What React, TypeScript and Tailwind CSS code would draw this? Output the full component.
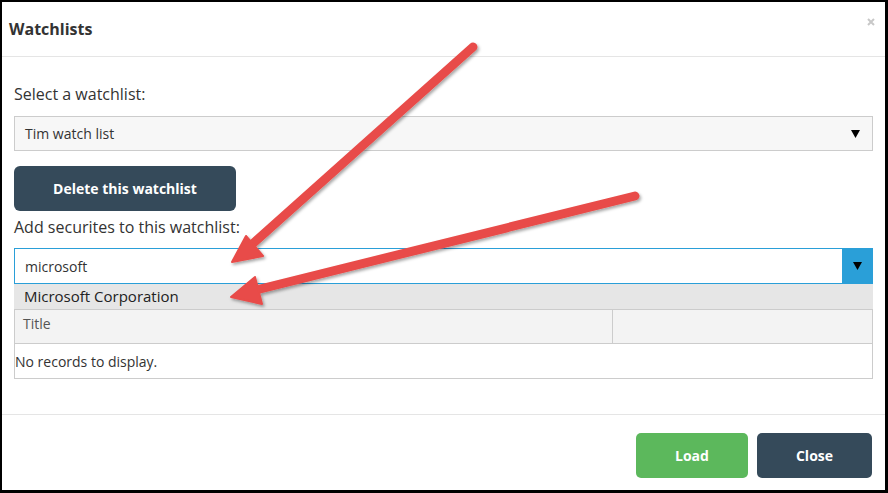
import React from "react";

const font = { fontFamily: '"Open Sans", "Noto Sans", sans-serif' };

const Caret = () => (
  <svg width="9" height="8" viewBox="0 0 9 8">
    <polygon points="0,0 9,0 4.5,8" fill="#000" />
  </svg>
);

// red callout arrows drawn over the dialog
const Arrows = () => (
  <svg className="pointer-events-none absolute inset-0" width="888" height="493" viewBox="0 0 888 493">
    <defs>
      <filter id="sh" x="-20%" y="-20%" width="140%" height="140%">
        <feDropShadow dx="1.5" dy="2" stdDeviation="1.5" floodColor="#000" floodOpacity="0.35" />
      </filter>
    </defs>
    <g filter="url(#sh)" fill="#e84c48" stroke="#e84c48" strokeLinecap="round" strokeLinejoin="round">
      <line x1="473" y1="47" x2="248" y2="248" strokeWidth="9" />
      <polygon points="232,262 246,236 263,256" strokeWidth="2" />
      <line x1="635" y1="196" x2="252" y2="291" strokeWidth="9" />
      <polygon points="231,297 255,277 262,304" strokeWidth="2" />
    </g>
  </svg>
);

export default function App() {
  return (
    <div className="relative h-[493px] w-[888px] overflow-hidden bg-black" style={font}>
      <div className="ml-[2px] mt-[2px] flex h-[488px] w-[883px] flex-col bg-white">
        {/* header */}
        <div className="relative flex h-[55px] items-center border-b border-[#e5e5e5] pl-[7px]">
          <h4 className="text-[16px] font-bold text-[#333]">Watchlists</h4>
          <svg className="absolute right-[10px] top-[16px]" width="8" height="8" viewBox="0 0 8 8">
            <path d="M1 1 L7 7 M7 1 L1 7" stroke="#c8c8c8" strokeWidth="2" />
          </svg>
        </div>

        {/* body */}
        <div className="flex flex-col px-[12px] pt-[26px] text-[#333]">
          <label className="text-[16px] leading-[22px]">Select a watchlist:</label>
          <div className="mt-[11px] flex h-[35px] items-center justify-between border border-[#ccc] bg-[#f7f7f7] pl-[10px] pr-[12px] text-[14px] text-[#333]">
            <span>Tim watch list</span>
            <Caret />
          </div>
          <button className="mt-[15px] h-[45px] w-[222px] rounded-[6px] bg-[#354a5a] text-[14px] font-bold text-white">
            Delete this watchlist
          </button>
          <label className="mt-[5px] text-[16px] leading-[22px]">Add securites to this watchlist:</label>
          <div className="mt-[10px] flex h-[36px] border border-[#2a9fd8]">
            <div className="flex flex-1 items-center bg-white pl-[10px] text-[14px] text-[#333]">microsoft</div>
            <div className="flex w-[30px] items-center justify-center bg-[#2a9fd8]">
              <Caret />
            </div>
          </div>
          <div className="flex h-[26px] items-center border-b border-[#ccc] bg-[#e6e6e6] pl-[10px] text-[15px] text-[#222]">
            Microsoft Corporation
          </div>
          <div className="border-x border-b border-[#ccc]">
            <div className="flex h-[34px] border-b border-[#ccc] bg-[#f3f3f3] text-[14px] text-[#555]">
              <div className="w-[598px] border-r border-[#ccc] pl-[8px] pt-[3px]">Title</div>
              <div className="flex-1" />
            </div>
            <div className="flex h-[34px] items-center text-[14px] text-[#333]">No records to display.</div>
          </div>
        </div>

        {/* footer */}
        <div className="mt-[35px] flex flex-1 justify-end gap-[9px] border-t border-[#e5e5e5] pr-[13px] pt-[18px]">
          <button className="h-[45px] w-[112px] rounded-[5px] bg-[#5cb85c] text-[14px] font-bold text-white">Load</button>
          <button className="h-[45px] w-[115px] rounded-[5px] bg-[#354a5a] text-[14px] font-bold text-white">Close</button>
        </div>
      </div>
      <Arrows />
    </div>
  );
}
